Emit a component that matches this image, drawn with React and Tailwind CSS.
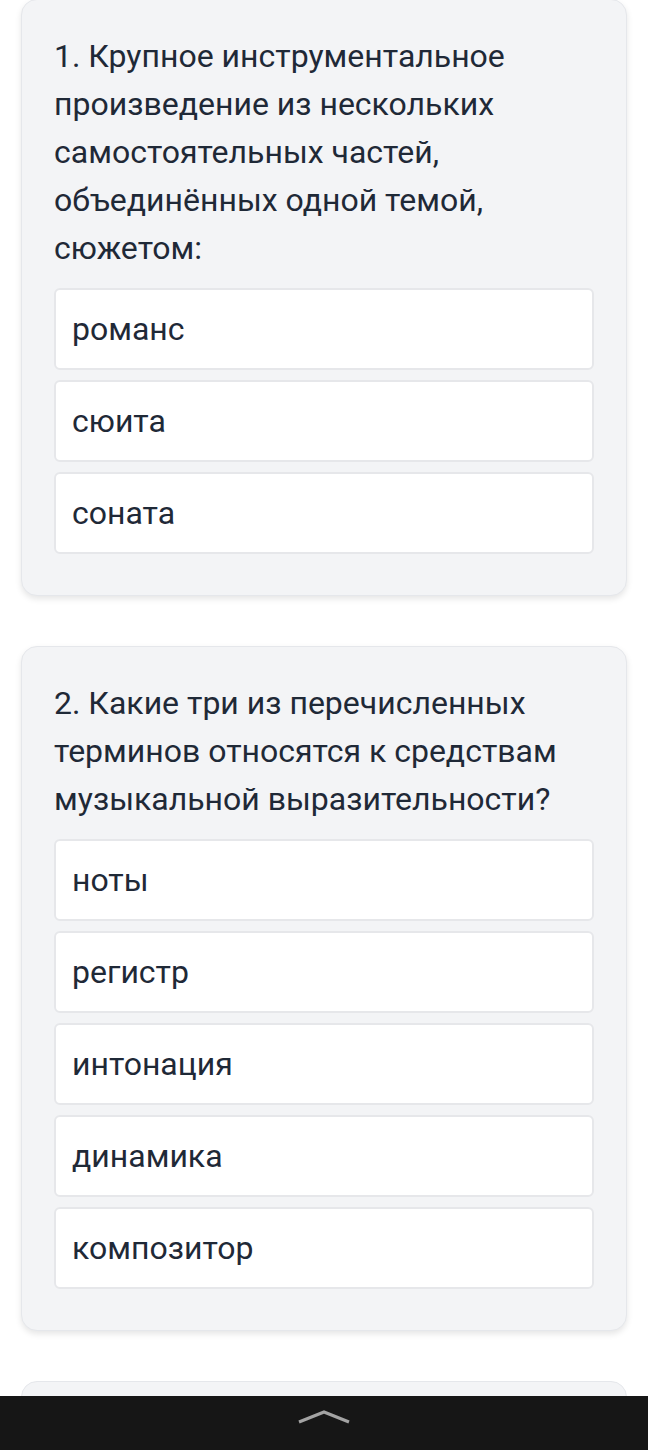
import React from "react";

const questions = [
  {
    text: "1. Крупное инструментальное произведение из нескольких самостоятельных частей, объединённых одной темой, сюжетом:",
    options: ["романс", "сюита", "соната"],
  },
  {
    text: "2. Какие три из перечисленных терминов относятся к средствам музыкальной выразительности?",
    options: ["ноты", "регистр", "интонация", "динамика", "композитор"],
  },
];

function Card({ q }) {
  return (
    <div className="rounded-[16px] border border-[#e5e7eb] bg-[#f3f4f6] px-8 pt-8 pb-[41px] shadow-[0_3px_6px_rgba(0,0,0,0.10)]">
      <div className="text-[32px] leading-[48px] text-[#1f2937]">{q.text}</div>
      <div className="mt-4 flex flex-col gap-[10px]">
        {q.options.map((o) => (
          <div
            key={o}
            className="flex h-[82px] items-center rounded-[6px] border-2 border-[#e6e7ea] bg-white px-4 text-[32px] text-[#1f2937]"
          >
            {o}
          </div>
        ))}
      </div>
    </div>
  );
}

export default function App() {
  return (
    <div className="relative min-h-[1450px] bg-white" style={{ fontFamily: "Roboto, 'Noto Sans', sans-serif" }}>
      <div className="flex flex-col gap-[50px] px-[21px] pb-[120px] -mt-[1px]">
        {questions.map((q, i) => (
          <Card key={i} q={q} />
        ))}
        <div className="h-[200px] rounded-[16px] border border-[#e5e7eb] bg-[#f3f4f6]" />
      </div>
      <div className="fixed bottom-0 left-0 right-0 flex h-[54px] items-start justify-center bg-[#161616]">
        <svg width="54" height="16" viewBox="0 0 54 16" className="mt-[13px]">
          <path d="M2 13 L27 3 L52 13" fill="none" stroke="#a3a3a3" strokeWidth="3.2" strokeLinecap="butt" strokeLinejoin="miter" />
        </svg>
      </div>
    </div>
  );
}
